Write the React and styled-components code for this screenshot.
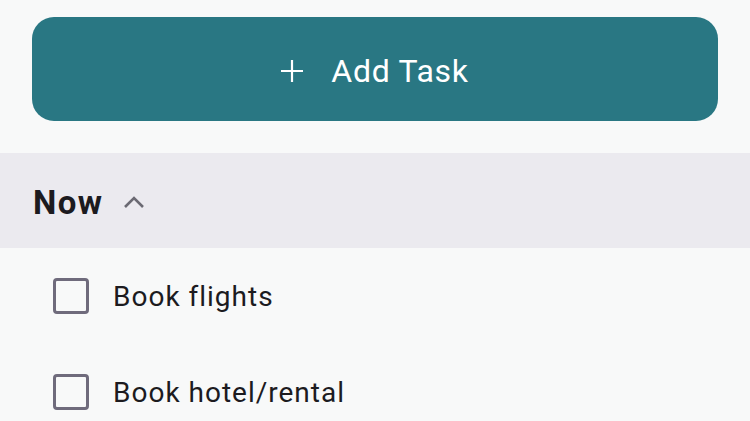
import React from "react";
import styled, { createGlobalStyle } from "styled-components";

const Global = createGlobalStyle`
  html, body { margin: 0; padding: 0; background: #f8f9f9; }
  body { font-family: Roboto, "Noto Sans", sans-serif; }
`;

const Page = styled.div`
  width: 750px;
  height: 421px;
  overflow: hidden;
  background: #f8f9f9;
  display: flex;
  flex-direction: column;
  & > * { flex-shrink: 0; }
`;

const Top = styled.div`
  padding: 17px 32px 32px 32px;
`;

const AddButton = styled.button`
  width: 100%;
  height: 104px;
  border: none;
  border-radius: 22px;
  background: #297783;
  color: #ffffff;
  display: flex;
  align-items: center;
  justify-content: center;
  gap: 28px;
  font-family: Roboto, sans-serif;
  font-size: 32px;
  font-weight: 400;
  letter-spacing: 0.7px;
  padding: 3px 0 0 0;
  cursor: pointer;
`;

const SectionHeader = styled.div`
  height: 95px;
  background: #ebeaef;
  display: flex;
  align-items: center;
  gap: 20px;
  padding: 4px 0 0 33px;
  box-sizing: border-box;
`;

const SectionTitle = styled.span`
  font-family: Roboto, sans-serif;
  font-size: 33px;
  font-weight: 700;
  color: #1c1b1f;
  letter-spacing: 1.4px;
`;

const List = styled.div`
  display: flex;
  flex-direction: column;
`;

const Row = styled.label`
  height: 96px;
  flex-shrink: 0;
  display: flex;
  align-items: center;
  gap: 24px;
  padding: 0 0 0 53px;
`;

const Box = styled.span`
  width: 36px;
  height: 36px;
  box-sizing: border-box;
  border: 3.3px solid #6f6b7c;
  border-radius: 4px;
  flex-shrink: 0;
`;

const TaskText = styled.span`
  font-family: Roboto, sans-serif;
  font-size: 28px;
  color: #1c1b1f;
  letter-spacing: 1px;
`;

const PlusIcon = () => (
  <svg width="22" height="22" viewBox="0 0 22 22">
    <path d="M11 0v22M0 11h22" stroke="#fff" strokeWidth="2.2" />
  </svg>
);

const Chevron = () => (
  <svg width="22" height="14" viewBox="0 0 22 14" style={{ marginTop: -2 }}>
    <path d="M2 12L11 3l9 9" fill="none" stroke="#6b6a73" strokeWidth="2.6" />
  </svg>
);

const tasks = ["Book flights", "Book hotel/rental"];

export default function App() {
  return (
    <Page>
      <Global />
      <Top>
        <AddButton>
          <PlusIcon />
          <span>Add Task</span>
        </AddButton>
      </Top>
      <SectionHeader>
        <SectionTitle>Now</SectionTitle>
        <Chevron />
      </SectionHeader>
      <List>
        {tasks.map((t) => (
          <Row key={t}>
            <Box />
            <TaskText>{t}</TaskText>
          </Row>
        ))}
      </List>
    </Page>
  );
}
